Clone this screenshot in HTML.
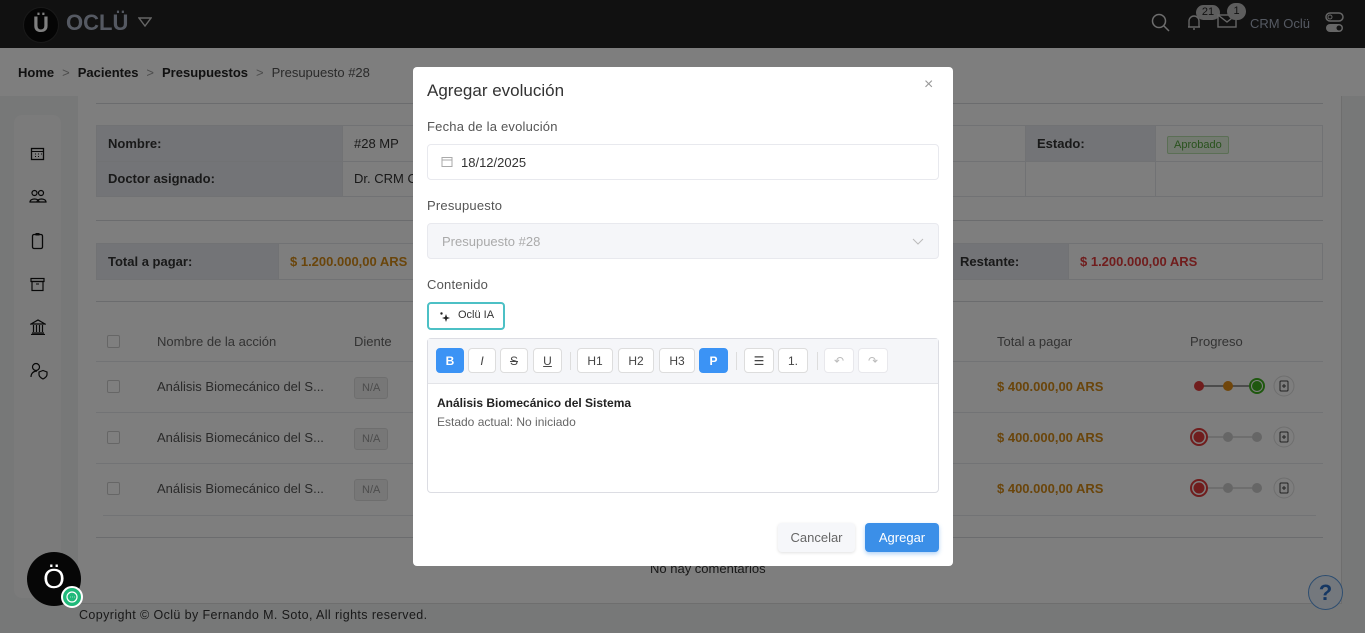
<!DOCTYPE html>
<html><head><meta charset="utf-8"><style>
*{box-sizing:border-box;margin:0;padding:0}
body{width:1365px;height:633px;overflow:hidden;position:relative;font-family:"Liberation Sans","DejaVu Sans",sans-serif;background:#eef0f0;color:#333}
.a{position:absolute}
.hdr{left:0;top:0;width:1365px;height:48px;background:#222}
.bc{left:0;top:48px;width:1365px;height:48px;background:#fcfcfc;font-size:13px;font-weight:bold;color:#222;padding:17px 18px}
.bc span.s{color:#999;font-weight:normal;margin:0 8px}
.bc span.l{font-weight:normal;color:#555}
.main{left:78px;top:96px;width:1264px;height:508px;background:#fcfcfc;border-right:1px solid #ddd}
.side{left:14px;top:115px;width:47px;height:483px;background:#f6f7f7;border-radius:8px}
.hl{height:1px;background:#d6d8dc;left:96px;width:1227px}
td{border:1px solid #e2e4e8;font-size:13px;padding:0 11px}
.lab{background:#e6e9ef;font-weight:bold;color:#333}
.th{font-size:13px;color:#666}
.row{font-size:13px;color:#555}
.cb{width:13px;height:13px;border:1px solid #ccc;border-radius:2px;background:#fff}
.na{border:1px solid #ddd;background:#eee;color:#999;font-size:11px;padding:4px 7px;border-radius:3px}
.gold{color:#d58b16;font-weight:bold;font-size:13px}
.ov{left:0;top:0;width:1365px;height:633px;background:rgba(0,0,0,.5)}
.modal{left:413px;top:67px;width:540px;height:499px;background:#fff;border-radius:4px}
.lbl{font-size:13px;color:#555;letter-spacing:.2px}
.inp{border:1px solid #e8e9ee;border-radius:4px;height:36px;left:14px;width:512px}
.tb{height:25px;border:1px solid #ddd;border-radius:4px;background:#fff;font-size:12px;color:#444;display:flex;align-items:center;justify-content:center;top:9px}
.tb.on{background:#3b93f5;border-color:#3b93f5;color:#fff;font-weight:bold}
.sep{width:1px;height:18px;background:#ddd;top:13px}
</style></head><body>
<div class="a hdr">
 <div class="a" style="left:23px;top:7px;width:36px;height:36px;border-radius:50%;background:#0a0a0a;border:1px solid #333;color:#fff;font-weight:bold;font-size:22px;text-align:center;line-height:34px">Ü</div>
 <div class="a" style="left:66px;top:10px;color:#aab3c4;font-weight:bold;font-size:22px">OCLÜ</div>
 <svg class="a" style="left:138px;top:17px" width="14" height="10"><path d="M1 1h12L7 9z" fill="none" stroke="#ccc" stroke-width="1.4"/></svg>
 <svg class="a" style="left:1151px;top:13px" width="20" height="20"><circle cx="8" cy="8" r="6.5" fill="none" stroke="#ddd" stroke-width="1.5"/><path d="M13 13l5 5" stroke="#ddd" stroke-width="1.5"/></svg>
 <svg class="a" style="left:1186px;top:12px" width="16" height="20"><path d="M3 15V9a5 5 0 0110 0v6H2h12M7 17h2" fill="none" stroke="#ccc" stroke-width="1.4"/></svg>
 <div class="a" style="left:1196px;top:5px;width:24px;height:15px;border-radius:8px;background:#bbb;color:#222;font-size:11px;text-align:center;line-height:15px">21</div>
 <svg class="a" style="left:1217px;top:13px" width="20" height="16"><rect x="1" y="2" width="18" height="12" fill="none" stroke="#ccc" stroke-width="1.4"/><path d="M1 2l9 7 9-7" fill="none" stroke="#ccc" stroke-width="1.4"/></svg>
 <div class="a" style="left:1227px;top:3px;width:19px;height:17px;border-radius:9px;background:#bbb;color:#222;font-size:11px;text-align:center;line-height:17px">1</div>
 <div class="a" style="left:1250px;top:16px;color:#aab3c4;font-size:13px">CRM Oclü</div>
 <svg class="a" style="left:1325px;top:12px" width="20" height="22"><rect x="1" y="1" width="17" height="8" rx="4" fill="none" stroke="#ccc" stroke-width="1.5"/><circle cx="5" cy="5" r="2" fill="none" stroke="#ccc"/><rect x="1" y="12" width="17" height="8" rx="4" fill="#ccc"/><circle cx="14" cy="16" r="2.5" fill="#222"/></svg>
</div>
<div class="a bc">Home<span class="s">&gt;</span>Pacientes<span class="s">&gt;</span>Presupuestos<span class="s">&gt;</span><span class="l">Presupuesto #28</span></div>
<div class="a main"></div>
<div class="a side">
 <svg class="a" style="left:16px;top:31px" width="16" height="16"><rect x="1.5" y="2.5" width="12" height="11" fill="none" stroke="#111" stroke-width="1.3"/><path d="M1.5 5.5h12M5 8h1M8 8h1M11 8h1M5 10.5h1M8 10.5h1" stroke="#111"/></svg>
 <svg class="a" style="left:15px;top:74px" width="18" height="16"><circle cx="5.5" cy="4" r="2.5" fill="none" stroke="#111" stroke-width="1.2"/><circle cx="12" cy="4" r="2.5" fill="none" stroke="#111" stroke-width="1.2"/><path d="M1 13c0-4 9-4 9 0zM8 13c0-4 9-4 9 0z" fill="none" stroke="#111" stroke-width="1.2"/></svg>
 <svg class="a" style="left:17px;top:117px" width="14" height="18"><rect x="1.5" y="2.5" width="10" height="14" rx="1.5" fill="none" stroke="#111" stroke-width="1.3"/><rect x="4.5" y="1" width="4" height="2.5" fill="#111"/></svg>
 <svg class="a" style="left:16px;top:162px" width="16" height="16"><rect x="1" y="1.5" width="13" height="3" fill="none" stroke="#111" stroke-width="1.2"/><rect x="2" y="4.5" width="11" height="9" fill="none" stroke="#111" stroke-width="1.2"/><path d="M6 7h3" stroke="#111"/></svg>
 <svg class="a" style="left:16px;top:204px" width="16" height="16"><path d="M1 5l7-4 7 4zM2 14h12M1 15.5h14M3.5 6v7M6.5 6v7M9.5 6v7M12.5 6v7" fill="none" stroke="#111" stroke-width="1.2"/></svg>
 <svg class="a" style="left:16px;top:247px" width="18" height="18"><circle cx="6" cy="5" r="3.5" fill="none" stroke="#111" stroke-width="1.2"/><path d="M1 15c0-4 3-6 6-6M9 10l4-1.5 4 1.5v2.5c0 2-2 3.5-4 4.5-2-1-4-2.5-4-4.5z" fill="none" stroke="#111" stroke-width="1.2"/></svg>
</div>
<div class="a hl" style="top:103px"></div>
<table class="a" style="left:96px;top:125px;width:1227px;border-collapse:collapse;height:72px">
<tr><td class="lab" style="width:246px">Nombre:</td><td style="width:683px;color:#333">#28 MP</td><td class="lab" style="width:130px">Estado:</td><td><span style="background:#e6f5e0;border:1px solid #b7dfaa;color:#52a43b;font-size:11px;padding:2px 6px;border-radius:2px">Aprobado</span></td></tr>
<tr><td class="lab">Doctor asignado:</td><td>Dr. CRM Oclü</td><td></td><td></td></tr>
</table>
<div class="a hl" style="top:220px"></div>
<table class="a" style="left:96px;top:243px;width:1227px;border-collapse:collapse;height:37px">
<tr><td class="lab" style="width:182px">Total a pagar:</td><td class="gold" style="width:670px">$ 1.200.000,00 ARS</td><td class="lab" style="width:120px">Restante:</td><td style="color:#e03a3a;font-weight:bold">$ 1.200.000,00 ARS</td></tr>
</table>
<div class="a hl" style="top:301px"></div>
<div class="a cb" style="left:107px;top:335px"></div>
<div class="a th" style="left:157px;top:334px">Nombre de la acción</div>
<div class="a th" style="left:354px;top:334px">Diente</div>
<div class="a th" style="left:997px;top:334px">Total a pagar</div>
<div class="a th" style="left:1190px;top:334px">Progreso</div>
<div class="a hl" style="top:361px;background:#e4e6ea"></div>
<div class="a hl" style="top:412px;background:#e4e6ea"></div>
<div class="a hl" style="top:463px;background:#e4e6ea"></div>
<div class="a hl" style="top:515px;background:#e4e6ea;left:103px;width:1213px"></div>
<div class="a hl" style="top:537px"></div>
<div class="a cb" style="left:107px;top:380px"></div><div class="a row" style="left:157px;top:379px">Análisis Biomecánico del S...</div><div class="a na" style="left:354px;top:377px">N/A</div><div class="a gold" style="left:997px;top:379px">$ 400.000,00 ARS</div>
<div class="a cb" style="left:107px;top:431px"></div><div class="a row" style="left:157px;top:430px">Análisis Biomecánico del S...</div><div class="a na" style="left:354px;top:428px">N/A</div><div class="a gold" style="left:997px;top:430px">$ 400.000,00 ARS</div>
<div class="a cb" style="left:107px;top:482px"></div><div class="a row" style="left:157px;top:481px">Análisis Biomecánico del S...</div><div class="a na" style="left:354px;top:479px">N/A</div><div class="a gold" style="left:997px;top:481px">$ 400.000,00 ARS</div>
<svg class="a" style="left:1188px;top:374px" width="110" height="130">
<g><path d="M11 12h58" stroke="#999" stroke-width="2"/><circle cx="11" cy="12" r="5" fill="#e03a3a"/><circle cx="40" cy="12" r="5" fill="#e08d16"/><circle cx="69" cy="12" r="7" fill="#fff" stroke="#3fb11e" stroke-width="2"/><circle cx="69" cy="12" r="5" fill="#3fb11e"/></g>
<g transform="translate(0,51)"><path d="M18 12h50" stroke="#bbb"/><circle cx="11" cy="12" r="8" fill="none" stroke="#e03a3a" stroke-width="2"/><circle cx="11" cy="12" r="5.5" fill="#e03a3a"/><circle cx="40" cy="12" r="5" fill="#ccc"/><circle cx="69" cy="12" r="5" fill="#ccc"/></g>
<g transform="translate(0,102)"><path d="M18 12h50" stroke="#bbb"/><circle cx="11" cy="12" r="8" fill="none" stroke="#e03a3a" stroke-width="2"/><circle cx="11" cy="12" r="5.5" fill="#e03a3a"/><circle cx="40" cy="12" r="5" fill="#ccc"/><circle cx="69" cy="12" r="5" fill="#ccc"/></g>
<g fill="none" stroke="#444"><circle cx="96" cy="12" r="10" stroke="#ddd"/><rect x="92" y="7" width="8" height="10" rx="1"/><path d="M96 10v4M94 12h4"/><circle cx="96" cy="63" r="10" stroke="#ddd"/><rect x="92" y="58" width="8" height="10" rx="1"/><path d="M96 61v4M94 63h4"/><circle cx="96" cy="114" r="10" stroke="#ddd"/><rect x="92" y="109" width="8" height="10" rx="1"/><path d="M96 112v4M94 114h4"/></g>
</svg>
<div class="a" style="left:650px;top:561px;font-size:13px;color:#333">No hay comentarios</div>
<div class="a" style="left:78px;top:603px;width:1264px;height:1px;background:#ddd"></div>
<div class="a" style="left:79px;top:608px;font-size:12.5px;color:#333;letter-spacing:.4px">Copyright © Oclü by Fernando M. Soto, All rights reserved.</div>
<div class="a" style="left:1308px;top:575px;width:35px;height:35px;border-radius:50%;border:1px solid #5b9be0;background:#e8f0fa;color:#2a6fc7;font-size:22px;font-weight:bold;text-align:center;line-height:33px">?</div>
<div class="a ov"></div>
<div class="a" style="left:27px;top:552px;width:54px;height:54px;border-radius:50%;background:#060606;color:#fff;font-size:28px;text-align:center;line-height:54px">Ö</div>
<div class="a" style="left:61px;top:586px;width:22px;height:22px;border-radius:50%;background:#1fb97a;border:2px solid #fff"><svg width="18" height="18"><circle cx="9" cy="9" r="5" fill="none" stroke="#fff" stroke-width="1.2"/><path d="M7 9h.5M9 9h.5M11 9h.5" stroke="#fff"/></svg></div>
<div class="a modal">
 <div class="a" style="left:14px;top:14px;font-size:17px;color:#333">Agregar evolución</div>
 <div class="a" style="left:511px;top:9px;font-size:16px;color:#999">×</div>
 <div class="a lbl" style="left:14px;top:52px">Fecha de la evolución</div>
 <div class="a inp" style="top:77px"><svg class="a" style="left:13px;top:11px" width="12" height="12"><rect x="1" y="1.5" width="10" height="9" fill="none" stroke="#aaa"/><path d="M1 4h10" stroke="#aaa"/></svg><div class="a" style="left:33px;top:10px;font-size:13px;color:#333">18/12/2025</div></div>
 <div class="a lbl" style="left:14px;top:131px">Presupuesto</div>
 <div class="a inp" style="top:156px;background:#f5f6f9"><div class="a" style="left:14px;top:10px;font-size:13px;color:#aaa">Presupuesto #28</div><svg class="a" style="left:484px;top:14px" width="12" height="8"><path d="M1 1l5 5 5-5" fill="none" stroke="#bbb"/></svg></div>
 <div class="a lbl" style="left:14px;top:210px">Contenido</div>
 <div class="a" style="left:14px;top:235px;width:78px;height:28px;border:2px solid #4cc0c5;border-radius:4px;font-size:11px;color:#333;padding:5px 0 0 29px">Oclü IA<svg class="a" style="left:10px;top:7px" width="12" height="12"><path d="M7 3l1 3 3 1-3 1-1 3-1-3-3-1 3-1z" fill="#222"/><circle cx="2.5" cy="2.5" r="1.2" fill="#222"/></svg></div>
 <div class="a" style="left:14px;top:271px;width:512px;height:155px;border:1px solid #dcdde3;border-radius:4px">
  <div class="a" style="left:0;top:0;width:510px;height:45px;background:#f5f6f9;border-bottom:1px solid #e3e4e8"></div>
  <div class="a tb on" style="left:8px;width:28px">B</div>
  <div class="a tb" style="left:40px;width:28px;font-style:italic">I</div>
  <div class="a tb" style="left:72px;width:28px;text-decoration:line-through">S</div>
  <div class="a tb" style="left:105px;width:29px;text-decoration:underline">U</div>
  <div class="a sep" style="left:142px"></div>
  <div class="a tb" style="left:149px;width:36px">H1</div>
  <div class="a tb" style="left:190px;width:36px">H2</div>
  <div class="a tb" style="left:231px;width:36px">H3</div>
  <div class="a tb on" style="left:271px;width:29px">P</div>
  <div class="a sep" style="left:308px"></div>
  <div class="a tb" style="left:316px;width:30px">☰</div>
  <div class="a tb" style="left:350px;width:30px">1.</div>
  <div class="a sep" style="left:389px"></div>
  <div class="a tb" style="left:396px;width:30px;border-color:#e8e8ec;color:#bbb">↶</div>
  <div class="a tb" style="left:430px;width:30px;border-color:#e8e8ec;color:#bbb">↷</div>
  <div class="a" style="left:9px;top:57px;font-size:12px;font-weight:bold;color:#222">Análisis Biomecánico del Sistema</div>
  <div class="a" style="left:9px;top:76px;font-size:12px;color:#666">Estado actual: No iniciado</div>
 </div>
 <div class="a" style="left:365px;top:456px;width:77px;height:29px;background:#f6f7fa;border-radius:4px;box-shadow:0 1px 3px rgba(0,0,0,.12);font-size:13px;color:#666;text-align:center;line-height:29px">Cancelar</div>
 <div class="a" style="left:452px;top:456px;width:74px;height:29px;background:#3b8fe8;border-radius:4px;box-shadow:0 2px 4px rgba(59,143,232,.4);font-size:13px;color:#fff;text-align:center;line-height:29px">Agregar</div>
</div>
</body></html>
